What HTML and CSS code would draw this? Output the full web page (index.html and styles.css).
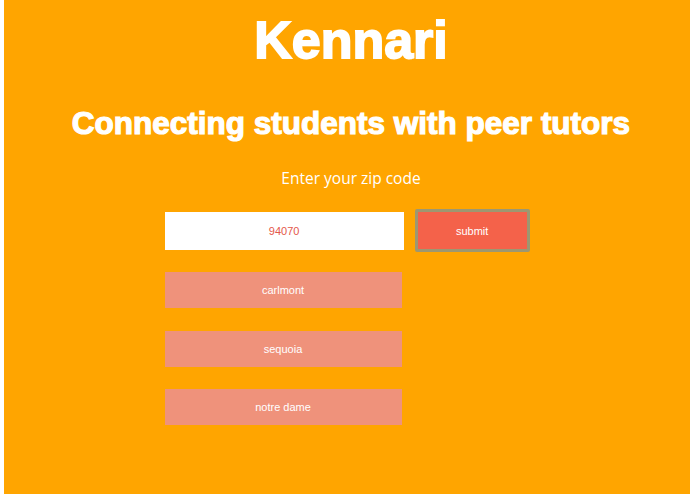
FILE: index.html
```html
<!DOCTYPE html>
<html lang="en">
<head>
    <meta charset="UTF-8">
    <meta name="viewport" content="width=device-width, initial-scale=1.0">
    <title>Kennari</title>
    <link rel="stylesheet" href="styles.css">
</head>
<body>
    <main class="page">
        <h1 class="brand">Kennari</h1>
        <h2 class="tagline">Connecting students with peer tutors</h2>

        <form class="zip-form" onsubmit="return false;">
            <label for="zip" class="zip-label">Enter your zip code</label>
            <div class="zip-row">
                <input type="text" id="zip" name="zip" class="zip-input" value="94070">
                <button type="submit" class="zip-submit">submit</button>
            </div>

            <!-- Schools near the zip code -->
            <ul class="schools">
                <li class="school">carlmont</li>
                <li class="school">sequoia</li>
                <li class="school">notre dame</li>
            </ul>
        </form>
    </main>
</body>
</html>
```

FILE: styles.css
```css
html, body {
    margin: 0;
    padding: 0;
    background-color: #ffffff;
}
.page {
    margin: 0 5px 0 4px;
    min-height: 494px;
    background-color: #ffa500;
    color: #ffffff;
    text-align: center;
    padding-top: 12px;
    box-sizing: border-box;
}
.brand {
    margin: 0;
    padding-left: 8px;
    font-family: "Liberation Sans", Arial, sans-serif;
    font-size: 52px;
    line-height: 56px;
    font-weight: bold;
    -webkit-text-stroke: 1.8px #ffffff;
}
.tagline {
    margin: 37px 0 0;
    padding-left: 8px;
    font-family: "Liberation Sans", Arial, sans-serif;
    font-size: 31.5px;
    line-height: 36px;
    font-weight: bold;
    -webkit-text-stroke: 1.2px #ffffff;
}
.zip-form {
    width: 365px;
    margin: 0 auto;
}
.zip-label {
    display: block;
    margin-top: 27px;
    padding-left: 8px;
    font-family: "Open Sans", sans-serif;
    font-size: 15.5px;
    line-height: 20px;
}
.zip-row {
    display: flex;
    align-items: center;
    gap: 11px;
    margin-top: 21px;
}
.zip-input {
    width: 240px;
    height: 38px;
    box-sizing: border-box;
    border: none;
    background-color: #ffffff;
    color: #e4574a;
    text-align: center;
    font-family: "Liberation Sans", Arial, sans-serif;
    font-size: 11px;
    outline: none;
}
.zip-submit {
    width: 115px;
    height: 43px;
    box-sizing: border-box;
    border: 3px solid #9d9771;
    border-radius: 2px;
    background-color: #f4624a;
    color: #ffffff;
    font-family: "Liberation Sans", Arial, sans-serif;
    font-size: 11px;
    cursor: pointer;
}
.schools {
    list-style: none;
    margin: 20px 0 0;
    padding: 0;
    display: flex;
    flex-direction: column;
    gap: 22.5px;
}
.school {
    width: 237px;
    height: 36px;
    line-height: 36px;
    background-color: #ef927b;
    font-family: "Liberation Sans", Arial, sans-serif;
    font-size: 11px;
}
```
